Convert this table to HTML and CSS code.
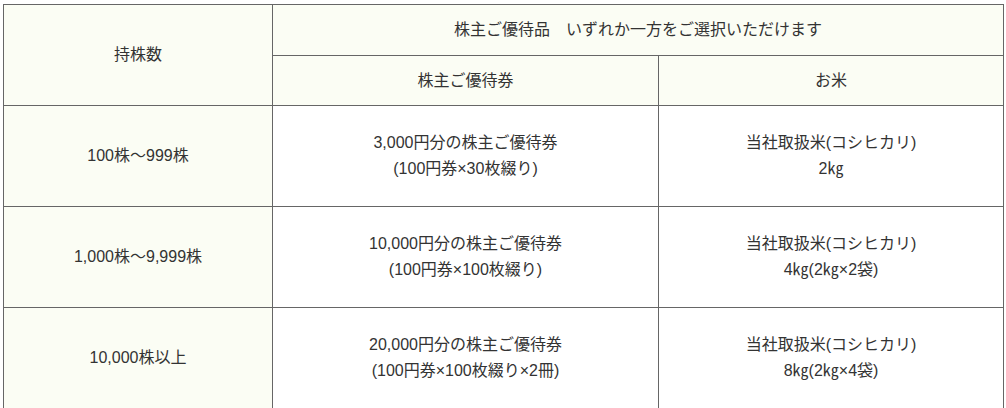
FILE: index.html
```html
<!DOCTYPE html>
<html lang="ja">
<head>
<meta charset="utf-8">
<link rel="stylesheet" href="styles.css">
</head>
<body>
<table class="benefits">
  <colgroup>
    <col class="c1">
    <col class="c2">
    <col class="c3">
  </colgroup>
  <tr class="hrow">
    <th class="shade" rowspan="2">持株数</th>
    <th class="shade" colspan="2">株主ご優待品　いずれか一方をご選択いただけます</th>
  </tr>
  <tr class="hrow2">
    <th class="shade">株主ご優待券</th>
    <th class="shade">お米</th>
  </tr>
  <tr class="drow">
    <td class="shade">100株～999株</td>
    <td>3,000円分の株主ご優待券<br>(100円券×30枚綴り)</td>
    <td>当社取扱米(コシヒカリ)<br>2㎏</td>
  </tr>
  <tr class="drow">
    <td class="shade">1,000株～9,999株</td>
    <td>10,000円分の株主ご優待券<br>(100円券×100枚綴り)</td>
    <td>当社取扱米(コシヒカリ)<br>4㎏(2㎏×2袋)</td>
  </tr>
  <tr class="drow">
    <td class="shade">10,000株以上</td>
    <td>20,000円分の株主ご優待券<br>(100円券×100枚綴り×2冊)</td>
    <td>当社取扱米(コシヒカリ)<br>8㎏(2㎏×4袋)</td>
  </tr>
</table>
</body>
</html>
```

FILE: styles.css
```css
html, body {
  margin: 0;
  padding: 0;
  background: #ffffff;
}

body {
  padding: 4px 0 0 3px;
  font-family: "Liberation Sans", "Noto Sans CJK JP", sans-serif;
  font-size: 16px;
  color: #333333;
}

.benefits {
  border-collapse: collapse;
  width: 1000px;
  table-layout: fixed;
}

.c1 { width: 269px; }
.c2 { width: 386px; }
.c3 { width: 345px; }

.benefits th,
.benefits td {
  border: 1px solid #666666;
  text-align: center;
  vertical-align: middle;
  font-weight: normal;
  line-height: 26px;
  padding: 0;
}

.shade {
  background: #fbfdf4;
}

.hrow th { height: 50px; }
.hrow2 th { height: 49px; }
.drow td { height: 100px; }
```
